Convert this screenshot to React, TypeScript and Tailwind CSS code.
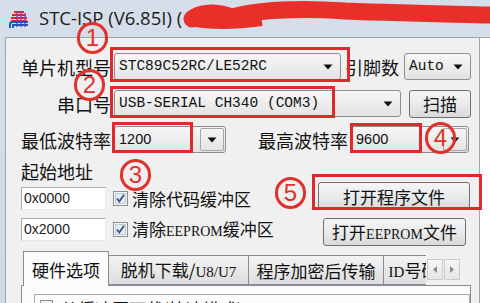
import React from "react"

const CJK = "font-['Noto_Sans_CJK_SC',sans-serif]"
const MONO = "font-['Liberation_Mono','Noto_Sans_CJK_SC',monospace]"
const SANS = "font-['Liberation_Sans','Noto_Sans_CJK_SC',sans-serif]"
const SERIF = "font-['Liberation_Serif',serif]"

const Arrow = () => (
    <svg width="10" height="6" viewBox="0 0 10 6">
        <path d="M0.5 0.5 H9.5 L5 5.5 Z" fill="#111" />
    </svg>
)

const Combo = ({
    text,
    width,
    font = MONO,
    boxed = false
}: {
    text: string
    width: string
    font?: string
    boxed?: boolean
}) => (
    <div
        className={`${width} flex h-[27px] items-stretch rounded-[3px] border border-[#8d8e90] bg-linear-to-b from-[#f7f7f7] to-[#e3e3e3]`}
    >
        <span className={`${font} flex flex-1 items-center pl-[4px] text-[14.5px] text-[#111] leading-none`}>
            {text}
        </span>
        <span
            className={`flex w-[24px] items-center justify-center ${boxed ? "m-[1px] rounded-[2px] border border-[#a5a6a8]" : ""}`}
        >
            <Arrow />
        </span>
    </div>
)

const Button = ({ children, width }: { children: React.ReactNode; width: string }) => (
    <div
        className={`${width} flex h-[28px] items-center justify-center rounded-[3px] border border-[#707070] bg-linear-to-b from-[#f5f5f5] via-[#ebebeb] to-[#d9d9d9] text-[17px] text-[#111] leading-none ${CJK}`}
    >
        <span>{children}</span>
    </div>
)

const Check = () => (
    <svg width="15" height="15" viewBox="0 0 15 15" className="shrink-0">
        <rect x="0.5" y="0.5" width="14" height="14" fill="#f4f6f9" stroke="#8e8f8f" />
        <rect x="2.5" y="2.5" width="10" height="10" fill="#e6ebf1" stroke="#c3cad3" />
        <path d="M4 7.5 L6.3 10.5 L11 3.8" fill="none" stroke="#3a4f8c" strokeWidth="1.8" />
    </svg>
)

const Field = ({ text }: { text: string }) => (
    <div
        className={`flex h-[23px] w-[85px] items-center border border-[#abadb3] border-r-[#e3e9ef] border-b-[#e3e9ef] bg-white pl-[2px] text-[14px] text-[#222] ${SANS}`}
    >
        {text}
    </div>
)

const Circle = ({ n, className }: { n: string; className: string }) => (
    <div
        className={`absolute flex h-[32px] w-[31px] items-center justify-center rounded-full border-[3px] border-[#e2312c] text-[24px] text-[#e2312c] leading-none ${SANS} ${className}`}
    >
        {n}
    </div>
)

const Box = ({ className }: { className: string }) => (
    <div className={`absolute border-[3px] border-[#e0282d] ${className}`} />
)

const Tab = ({ children, width, active }: { children: React.ReactNode; width: string; active?: boolean }) => (
    <div
        className={`${width} flex shrink-0 items-center justify-center border border-[#898c95] text-[17px] text-[#111] leading-none ${CJK} ${
            active
                ? "-mb-px h-[35px] border-b-0 bg-[#fbfbfb]"
                : "h-[30px] border-l-0 bg-linear-to-b from-[#f3f3f3] to-[#dedede]"
        }`}
    >
        <span className="whitespace-nowrap">{children}</span>
    </div>
)

export default function App() {
    return (
        <div className="relative h-[303px] w-[490px] overflow-hidden bg-linear-to-b from-[#d6dfe9] to-[#cfd9e4]">
            {/* title bar */}
            <div className="relative flex h-[37px] items-center gap-[9px] pl-[8px]">
                <svg width="22" height="20" viewBox="0 0 22 20">
                    <path d="M6 3 H16 M4 6 H18 M3 9 H19 M3 12 H19" stroke="#d8252b" strokeWidth="2" />
                    <path d="M9 2 V18 M13 2 V18 M17 4 V18" stroke="#7b4aa0" strokeWidth="1.4" />
                    <path d="M2 19 V15 Q2 13 5 13 H20 M5 19 V16 H20" stroke="#2355b5" strokeWidth="2" fill="none" />
                </svg>
                <span className="font-['Open_Sans',sans-serif] text-[18.5px] text-[#1c1c1c] leading-none">
                    STC-ISP (V6.85I) (
                </span>
                <svg className="absolute top-0 left-0" width="490" height="37" viewBox="0 0 490 37">
                    <path
                        d="M192 19 C 200 12, 215 11, 232 17 C 262 9, 300 8, 345 11 C 395 13, 445 14, 490 15"
                        stroke="#e8302a"
                        strokeWidth="17"
                        strokeLinecap="round"
                        fill="none"
                    />
                    <path d="M190 22 C 215 27, 240 25, 262 22" stroke="#e8302a" strokeWidth="8" fill="none" />
                </svg>
            </div>

            <div className="flex h-[266px]">
                <div className="w-[5px]" />
                {/* main panel */}
                <div className="flex flex-1 flex-col border-t border-l border-[#9aa5b1] bg-[#f0f0f0] pt-[15px]">
                    <div className="flex h-[27px] items-center">
                        <span className={`w-[105px] text-right text-[18px] text-[#111] leading-none ${CJK}`}>
                            单片机型号
                        </span>
                        <div className="ml-[3px]">
                            <Combo text="STC89C52RC/LE52RC" width="w-[227px]" />
                        </div>
                        <span className={`ml-[4px] text-[18px] text-[#111] leading-none ${CJK}`}>引脚数</span>
                        <div className="ml-[5px]">
                            <Combo text="Auto" width="w-[67px]" />
                        </div>
                    </div>

                    <div className="mt-[10px] flex h-[27px] items-center">
                        <span className={`w-[105px] text-right text-[18px] text-[#111] leading-none ${CJK}`}>
                            串口号
                        </span>
                        <div className="ml-[3px]">
                            <Combo text="USB-SERIAL CH340 (COM3)" width="w-[287px]" />
                        </div>
                        <div className="ml-[8px]">
                            <Button width="w-[62px]">扫描</Button>
                        </div>
                    </div>

                    <div className="mt-[9px] flex h-[27px] items-center">
                        <span className={`w-[105px] text-right text-[18px] text-[#111] leading-none ${CJK}`}>
                            最低波特率
                        </span>
                        <div className="ml-[3px]">
                            <Combo text="1200" width="w-[112px]" font={SANS} boxed />
                        </div>
                        <span className={`w-[122px] text-right text-[18px] text-[#111] leading-none ${CJK}`}>
                            最高波特率
                        </span>
                        <div className="ml-[3px]">
                            <Combo text="9600" width="w-[118px]" font={SANS} boxed />
                        </div>
                    </div>

                    <div className={`mt-[9px] pl-[15px] text-[18px] text-[#111] leading-none ${CJK}`}>起始地址</div>

                    <div className="mt-[2px] flex h-[29px] items-end">
                        <div className="flex items-center pl-[15px]">
                            <Field text="0x0000" />
                            <span className="ml-[7px]">
                                <Check />
                            </span>
                            <span className={`ml-[4px] text-[17px] text-[#111] leading-none ${CJK}`}>
                                清除代码缓冲区
                            </span>
                        </div>
                        <div className="mr-[9px] ml-auto self-start">
                            <Button width="w-[152px]">打开程序文件</Button>
                        </div>
                    </div>

                    <div className="mt-[8px] flex h-[29px] items-start">
                        <div className="flex items-center pl-[15px]">
                            <Field text="0x2000" />
                            <span className="ml-[7px]">
                                <Check />
                            </span>
                            <span className={`ml-[4px] text-[17px] text-[#111] leading-none ${CJK}`}>
                                清除<span className={`${SERIF} text-[14px]`}>EEPROM</span>缓冲区
                            </span>
                        </div>
                        <div className="mr-[13px] ml-auto">
                            <Button width="w-[143px]">
                                打开<span className={`${SERIF} text-[14px]`}>EEPROM</span>文件
                            </Button>
                        </div>
                    </div>

                    {/* tabs */}
                    <div className="mt-[5px] ml-[15px] flex w-[450px] items-end border-b border-[#898c95]">
                        <div className="ml-[2px]" />
                        <Tab width="w-[86px]" active>
                            硬件选项
                        </Tab>
                        <Tab width="w-[140px]">
                            脱机下载/<span className={`${SERIF} text-[15px]`}>U8/U7</span>
                        </Tab>
                        <Tab width="w-[135px]">程序加密后传输</Tab>
                        <div className="h-[30px] w-[42px] shrink-0 overflow-hidden">
                            <Tab width="w-[60px]">
                                <span className={`${SERIF} text-[15px]`}>ID</span>号码
                            </Tab>
                        </div>
                        <div className="mb-[5px] ml-[1px] flex gap-[1px]">
                            {["M5 1 L1 4.5 L5 8 Z", "M1 1 L5 4.5 L1 8 Z"].map((d, i) => (
                                <div
                                    key={i}
                                    className="flex h-[21px] w-[16px] items-center justify-center border border-[#c9cbcf] bg-linear-to-b from-[#f6f6f6] to-[#e6e6e6]"
                                >
                                    <svg width="6" height="9" viewBox="0 0 6 9">
                                        <path d={d} fill="#8a8a8a" />
                                    </svg>
                                </div>
                            ))}
                        </div>
                    </div>
                    <div className="ml-[15px] h-[40px] w-[450px] border-x border-[#898c95] bg-[#fbfbfb] pt-[8px] pl-[12px]">
                        <div className="flex h-[40px] items-start gap-[8px] border border-[#a8a8a8] pt-[5px] pl-[5px]">
                            <span className="block h-[13px] w-[13px] border border-[#8e8f8f] bg-[#f2f2f2]" />
                            <span className={`text-[17px] text-[#111] leading-none ${CJK}`}>
                                从缓冲区下载(快速模式)
                            </span>
                        </div>
                    </div>
                </div>
                {/* right pane */}
                <div className="w-[11px] border-t border-l border-[#a3a7ad] bg-white" />
            </div>

            {/* annotations */}
            <Box className="top-[47px] left-[110px] h-[35px] w-[240px]" />
            <Box className="top-[86px] left-[110px] h-[32px] w-[225px]" />
            <Box className="top-[122px] left-[112px] h-[31px] w-[81px]" />
            <Box className="top-[123px] left-[350px] h-[30px] w-[72px]" />
            <Box className="top-[174px] left-[312px] h-[36px] w-[170px]" />
            <Circle n="1" className="top-[22px] left-[77px]" />
            <Circle n="2" className="top-[69px] left-[74px]" />
            <Circle n="3" className="top-[159px] left-[120px]" />
            <Circle n="4" className="top-[122px] left-[425px]" />
            <Circle n="5" className="top-[177px] left-[275px]" />
        </div>
    )
}
